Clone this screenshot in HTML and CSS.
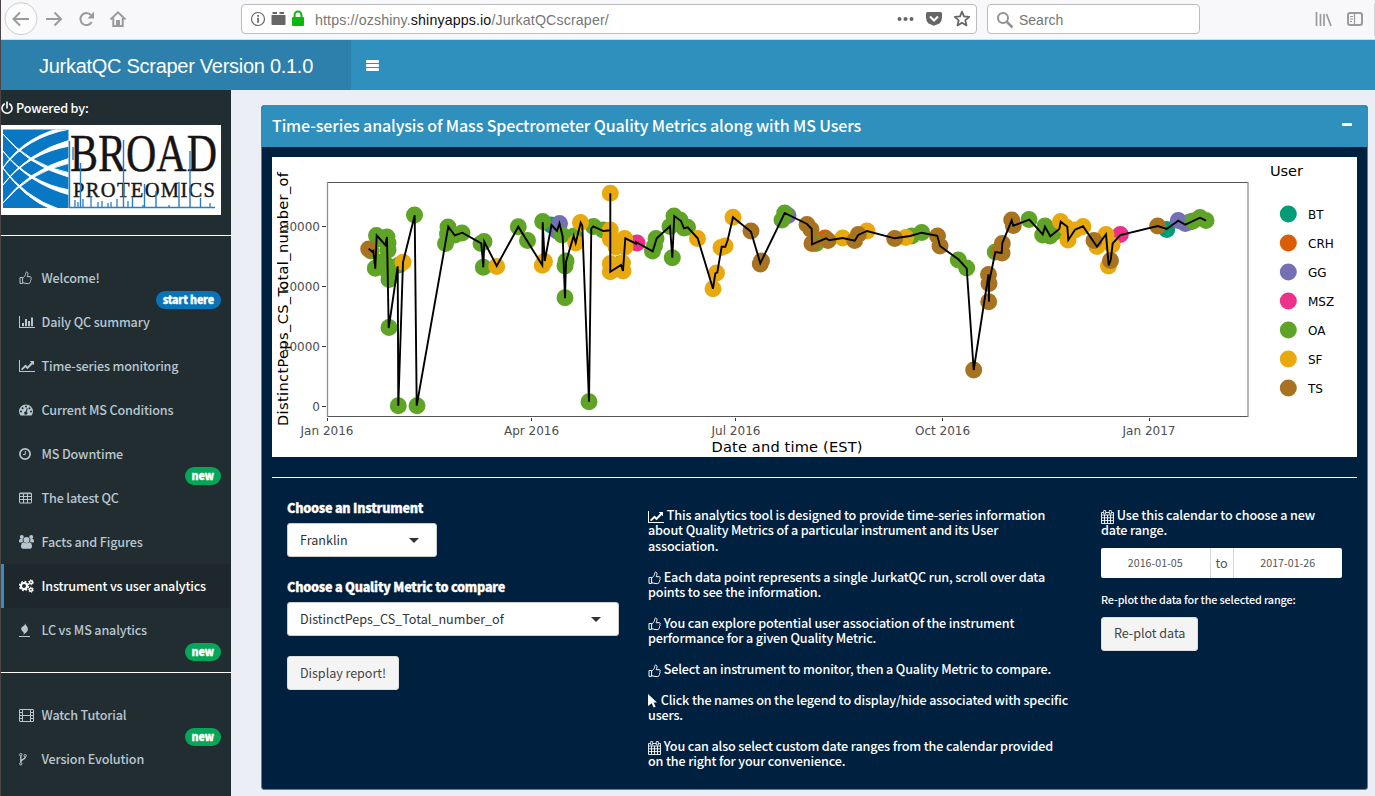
FILE: index.html
```html
<!DOCTYPE html>
<html lang="en">
<head>
<meta charset="utf-8">
<title>JurkatQC Scraper</title>
<link rel="stylesheet" href="styles.css">
</head>
<body>
<svg class="defs" width="0" height="0">
  <symbol id="thumb" viewBox="0 0 14 14"><path d="M1 6.500h2.600v5.900H1zM3.600 6.900C5.200 6.300 6 4.600 6.400 3.800 6.800 3 6.500 1.300 7.400 1.100c1.200 0 1.700.9 1.600 2-.1.9-.7 1.700-.8 2.600h3c1.100 0 1.500 1.400.6 2 .6.600.4 1.500-.3 1.800.3.700 0 1.300-.6 1.600.1 1-.4 1.500-1.300 1.500H8c-1.600 0-2.700-.8-4.400-.9" fill="none" stroke="currentColor" stroke-width="1"/></symbol>
  <symbol id="bars" viewBox="0 0 16 14"><path d="M0 1h1v11h15v1H0zM3 8h2v3.200H3zM6 4h2v7.200H6zM9 6h2v5.200H9zM12 2.500h2v8.700h-2z" fill="currentColor"/></symbol>
  <symbol id="line" viewBox="0 0 16 14"><path d="M0 1h1v11h15v1H0zM10.700 2h4.300v4.300l-1.300-1.300-5.200 5.200-2-2L3.200 11.300 2 10l4.500-4.500 2 2L12.200 3.500z" fill="currentColor"/></symbol>
  <symbol id="dash" viewBox="0 0 14 14"><path fill-rule="evenodd" d="M1.300 12.300A7 7 0 0 1 0 8.500a7 7 0 0 1 14 0 7 7 0 0 1-1.300 3.800q-.2.300-.6.300H1.900q-.4 0-.6-.3zM1 8.500a1 1 0 1 0 2 0 1 1 0 0 0-2 0zM2.600 5.200a1 1 0 1 0 2 0 1 1 0 0 0-2 0zM6 3.500a1 1 0 1 0 2 0 1 1 0 0 0-2 0zM9.500 5.200a1 1 0 1 0 2 0 1 1 0 0 0-2 0zM11 8.500a1 1 0 1 0 2 0 1 1 0 0 0-2 0zM7.900 4.900L6.700 8.500a1.600 1.600 0 1 0 1.100.3l1-3.600z" fill="currentColor"/></symbol>
  <symbol id="clock" viewBox="0 0 14 14"><circle cx="6" cy="7" r="5.100" fill="none" stroke="currentColor" stroke-width="1.700"/><path d="M6.300 4v3.500H4" fill="none" stroke="currentColor"/></symbol>
  <symbol id="table" viewBox="0 0 14 14"><path d="M.5 2.500q0-.5.500-.5h11q.5 0 .5.500v9q0 .5-.5.500H1q-.5 0-.5-.500zM.5 5.500h12M.5 8.500h12M4.500 3v9M8.500 3v9M.5 2.700h12" fill="none" stroke="currentColor"/></symbol>
  <symbol id="users" viewBox="0 0 15 14"><path d="M2.500 13Q2 12.500 2 11q0-3 2.200-3.700Q7.500 9.300 10.800 7.300 13 8 13 11q0 1.500-.5 2l-1 .7h-8zM0 6.500Q0 4 1 4h2.200l.6.500Q3.500 6 4 6.800L2 7.500H1Q0 7.500 0 6.500zM15 6.500Q15 4 14 4h-2.200l-.6.500q.3 1.500-.2 2.300l2 .7h1q1 0 1-1z" fill="currentColor"/><circle cx="7.500" cy="4.900" r="3" fill="currentColor"/><circle cx="2.800" cy="2" r="2" fill="currentColor"/><circle cx="12.200" cy="2" r="2" fill="currentColor"/></symbol>
  <symbol id="cogs" viewBox="0 0 15 14"><g fill="none" stroke="currentColor"><circle cx="5" cy="7" r="3" stroke-width="2"/><circle cx="5" cy="7" r="4.500" stroke-width="1.500" stroke-dasharray="1.770"/><circle cx="12" cy="3.300" r="1.500" stroke-width="1.400"/><circle cx="12" cy="3.300" r="2.500" stroke-width=".9" stroke-dasharray="1.300"/><circle cx="12" cy="10.800" r="1.500" stroke-width="1.400"/><circle cx="12" cy="10.800" r="2.500" stroke-width=".9" stroke-dasharray="1.300"/></g></symbol>
  <symbol id="fire" viewBox="0 0 14 14"><path d="M0 13h11v1H0zM6 .3c.7 2 3 3.400 2.900 6C8.900 9 6.700 9.500 4.500 12c.3-1.400.8-2-.4-3C3 8 1.800 6.800 2.300 5.100 2.900 3.500 6.200 3 6 .3z" fill="currentColor"/></symbol>
  <symbol id="film" viewBox="0 0 15 14"><path d="M1 1.500h13q.5 0 .5.500v11q0 .5-.5.500H1q-.5 0-.5-.500V2q0-.5.500-.500zM3.500 1.500v12M11.500 1.500v12M3.500 7.500h8M.5 4.500h3M.5 7.500h3M.5 10.500h3M11.500 4.500h3M11.500 7.500h3M11.500 10.500h3" fill="none" stroke="currentColor"/></symbol>
  <symbol id="fork" viewBox="0 0 14 14"><g fill="none" stroke="currentColor"><circle cx="1.800" cy="2.700" r="1.200"/><circle cx="1.800" cy="11.800" r="1.200"/><circle cx="6.200" cy="3.700" r="1.200"/><path d="M1.800 4v6.600M6.200 5c0 2.800-4.400 2-4.400 5" stroke-width="1.400"/></g></symbol>
  <symbol id="power" viewBox="0 0 12 14"><path d="M3.300 3A5 5 0 1 0 8.700 3M6 1v6" fill="none" stroke="currentColor" stroke-width="1.600" stroke-linecap="round"/></symbol>
  <symbol id="pointer" viewBox="0 0 10 14"><path d="M0 0l9 8.500H5.600l2 4.200-2 .9-1.900-4.300L0 12z" fill="currentColor"/></symbol>
  <symbol id="cal" viewBox="0 0 13 14"><path d="M.5 2.500h12v11H.5zM.5 5h12M3.500 5v8.500M6.500 5v8.500M9.500 5v8.500M.5 7.800h12M.5 10.600h12" fill="none" stroke="currentColor" stroke-width=".9"/><path d="M2.700.5h2v3.400h-2zM8.300.5h2v3.400h-2z" fill="#00203f" stroke="currentColor" stroke-width=".8"/></symbol>
  <clipPath id="mark"><rect x="2" y="4.500" width="65.500" height="78.500"/></clipPath>
</svg>

<div class="browser">
  <div class="nav-icons">
    <svg width="140" height="38" viewBox="0 0 140 38" fill="none" stroke="#9b9b9e" stroke-width="2">
      <circle cx="21" cy="18.700" r="16" fill="#fcfcfc" stroke="#cfcfd1" stroke-width="1"/>
      <path d="M29 19H14M20 12.500L13.500 19l6.500 6.500M46 19h15M54.500 12.500L61 19l-6.500 6.500"/>
      <path d="M91.700 22A6 6 0 1 1 91 15.200"/><path d="M94 11.500v7h-6.500z" fill="#9b9b9e" stroke="none"/>
      <path d="M110.500 19.500L118 12.300l7.500 7.200M113.300 18v8h9.400v-8"/><path d="M116 20h4v6h-4z" fill="#9b9b9e" stroke="none"/>
    </svg>
  </div>
  <div class="url">
    <svg width="60" height="28" viewBox="0 0 60 28"><circle cx="16" cy="14" r="6.500" fill="none" stroke="#6a6a6c" stroke-width="1.200"/><path d="M15.200 12.700h1.700v5h-1.700zM15.200 10h1.700v1.700h-1.700zM30 10q-.5 0-.5.500v8.500q0 1 1 1h12q1 0 1-1v-8.500q0-.5-.5-.500zM30.500 7h4.500v2h-4.500zM37.500 7H42v2h-4.500z" fill="#666"/><rect x="50" y="12" width="12" height="9" rx="1" fill="#0db80d"/><path d="M52.600 13V9.800a3.400 3.400 0 0 1 6.800 0V13" fill="none" stroke="#0db80d" stroke-width="2"/></svg>
    <span class="address">https://ozshiny.<b>shinyapps.io</b>/JurkatQCscraper/</span>
    <svg class="url-actions" width="84" height="28" viewBox="0 0 84 28"><g fill="#666"><circle cx="10.500" cy="14" r="2"/><circle cx="16.500" cy="14" r="2"/><circle cx="22.500" cy="14" r="2"/><path d="M38.500 7h13q1.500 0 1.500 1.500v4q0 3.500-2.500 6L45 20.700l-5.500-2.200Q37 16 37 12.500v-4Q37 7 38.500 7z"/></g><path d="M41 11.500l4 4 4-4" fill="none" stroke="#fff" stroke-width="2"/><path d="M73 6.700l2 4.700 5.200.4-3.900 3.500 1.200 5.100-4.500-2.700-4.500 2.700 1.200-5.100-3.900-3.500 5.200-.4z" fill="none" stroke="#666" stroke-width="1.800" stroke-linejoin="round"/></svg>
  </div>
  <div class="search"><svg width="20" height="20" viewBox="0 0 20 20" fill="none" stroke="#929294" stroke-width="2"><circle cx="7" cy="8" r="5"/><path d="M10.500 11.500L16.500 17.500" stroke-width="2.500"/></svg><span>Search</span></div>
  <svg class="tools" width="64" height="38" viewBox="0 0 64 38"><path d="M5.500 12v14M9.500 14v12M13 14v12M15.500 14l4.500 12" fill="none" stroke="#9a9a9a" stroke-width="1.700"/><rect x="37" y="13" width="14" height="12" rx="2" fill="none" stroke="#9a9a9a" stroke-width="2"/><path d="M43.500 13v12M39 16.500h3M39 19h3M39 21.500h2" stroke="#9a9a9a" stroke-width="1.200"/><path d="M63.500 3v33" stroke="#d5d5d8"/></svg>
</div>

<header class="topbar"><div class="brand"><span>JurkatQC Scraper Version 0.1.0</span></div><button class="toggle"><i></i><i></i><i></i></button></header>

<div class="shell">
  <aside class="sidebar">
    <div class="powered"><svg width="12" height="14"><use href="#power"/></svg><span>Powered by:</span></div>
    <svg class="logo" width="220" height="90" viewBox="0 0 220 90">
      <rect width="220" height="90" fill="#fff"/>
      <rect x="2" y="4.500" width="65.500" height="78.500" fill="#0878c4"/>
      <g clip-path="url(#mark)" fill="#fff" stroke="#fff" stroke-width=".9">
        <path d="M1 8Q28 40 69 48v4.500Q27 41 1 8z"/><path d="M1 25Q28 58 69 65v5Q27 59 1 25z"/><path d="M1 42Q25 73 58 84h-8Q24 74 1 42z"/>
        <path d="M1 79Q28 47 69 38v-5Q27 45 1 79z"/><path d="M1 61Q27 28 69 21v-6Q26 27 1 61z"/><path d="M1 44Q25 12 69 4V1Q24 9 1 44z"/>
      </g>
      <g class="logo-text"><text x="69" y="46" font-size="53" textLength="147" lengthAdjust="spacingAndGlyphs">BROAD</text><text x="72" y="72.300" font-size="20.500" textLength="142" lengthAdjust="spacing">PROTEOMICS</text></g>
      <path d="M68.500 16v67M72 22v13M79.500 38v45M122.500 15v68M143.500 59v23M155 66v17M178 57v25M189 26v57M199.500 73v10M131.500 72v11" stroke="#2b7cc0" stroke-width="1.400"/>
      <path d="M68 82.500h146M74 83v-8M77 83v-6M82 83v-9M90 83v-12M97 83v-6M101 83v-7M107 83v-5M110 83v-6M116 83v-9M127 83v-7M142 83v-3M168 83v-3M209 83v-5" stroke="#2b7cc0" stroke-width="1.300"/>
    </svg>
    <nav class="menu main-menu">
      <a><svg width="16" height="14"><use href="#thumb" width="14"/></svg>Welcome!<em class="badge blue">start here</em></a>
      <a><svg width="16" height="14"><use href="#bars" width="16"/></svg>Daily QC summary</a>
      <a><svg width="16" height="14"><use href="#line" width="16"/></svg>Time-series monitoring</a>
      <a><svg width="16" height="14"><use href="#dash" width="14"/></svg>Current MS Conditions</a>
      <a><svg width="16" height="14"><use href="#clock" width="14"/></svg>MS Downtime<em class="badge">new</em></a>
      <a><svg width="16" height="14"><use href="#table" width="14"/></svg>The latest QC</a>
      <a><svg width="16" height="14"><use href="#users" width="15"/></svg>Facts and Figures</a>
      <a class="active"><svg width="16" height="14"><use href="#cogs" width="15"/></svg>Instrument vs user analytics</a>
      <a><svg width="16" height="14"><use href="#fire" width="14"/></svg>LC vs MS analytics<em class="badge">new</em></a>
    </nav>
    <nav class="menu extra-menu">
      <a><svg width="16" height="14"><use href="#film" width="15"/></svg>Watch Tutorial<em class="badge">new</em></a>
      <a><svg width="16" height="14"><use href="#fork" width="14"/></svg>Version Evolution</a>
    </nav>
  </aside>

  <main class="content">
    <section class="box">
      <div class="box-head"><h3>Time-series analysis of Mass Spectrometer Quality Metrics along with MS Users</h3><i class="minus"></i></div>
      <div class="box-body">
        <svg class="chart" width="1085" height="300" viewBox="272 157 1085 300">
          <rect x="272" y="157" width="1085" height="300" fill="#fff"/>
          <path d="M327 182.500h921M327 416.500h921" stroke="#555" fill="none"/>
          <path d="M327.500 182v235M1248 182v235" stroke="#909090" stroke-width="1.300" fill="none"/>
          <path d="M322 226.500h4M322 286.500h4M322 346.500h4M322 406.500h4M327.500 418v3M531.500 418v3M735.500 418v3M942.500 418v3M1149.500 418v3" stroke="#333"/>
          <g class="tick"><g text-anchor="end"><text x="320" y="231">30000</text><text x="320" y="291">20000</text><text x="320" y="351">10000</text><text x="320" y="411">0</text></g>
          <g text-anchor="middle"><text x="327" y="435">Jan 2016</text><text x="531.500" y="435">Apr 2016</text><text x="736" y="435">Jul 2016</text><text x="942.500" y="435">Oct 2016</text><text x="1149" y="435">Jan 2017</text></g></g>
          <g class="axis"><text x="787" y="452" text-anchor="middle" textLength="151">Date and time (EST)</text><text transform="translate(288 299) rotate(-90)" text-anchor="middle" textLength="254">DistinctPeps_CS_Total_number_of</text><text x="1270" y="176" textLength="33">User</text></g>
          <g class="dots">
            <path stroke="#009b77" d="M551 225h0M1166.700 229.500h0"/>
            <path stroke="#dc5c04" d="M825 238h0"/>
            <path stroke="#7570b3" d="M557 231h0M559.500 223.500h0M788 215.500h0M1178.300 220.500h0M1185.300 223.500h0M1190 222h0"/>
            <path stroke="#ed3089" d="M637 243h0M1120.300 234.500h0"/>
            <path stroke="#5fa426" d="M371 251h0M375.300 268.300h0M376.500 235.500h0M381 239h0M387 237h0M388 243h0M388 250h0M382 262h0M388 266h0M388 272h0M389 279.500h0M389 327.500h0M398.300 405.700h0M399 265h0M414.500 215h0M417 405.700h0M448 227h0M445.500 243.500h0M447.500 234h0M455 235h0M462 233h0M481 243.500h0M483.300 267.300h0M484 241.500h0M518.300 226.700h0M527.500 240.500h0M542.700 221.500h0M562 235h0M565 297.700h0M565 266h0M566 261h0M574 236h0M589 401.700h0M593.500 226.500h0M603 230h0M620 264h0M652.500 251h0M654.500 246h0M656 238.500h0M670 226.500h0M672.300 257.700h0M674 216h0M680 220h0M684 228h0M687.500 227.300h0M782 220h0M784.700 213h0M816 243.500h0M911.700 236h0M921.700 232.500h0M958.300 260h0M966.700 268h0M995.300 252h0M1029 219.500h0M1042.700 235h0M1045 226h0M1050 236h0M1055 232h0M1193 221h0M1200 217.500h0M1206 220.500h0"/>
            <path stroke="#e8a90e" d="M403 262.300h0M496.700 266.500h0M542.300 265.300h0M544.500 261.500h0M575.700 243h0M580.500 222.500h0M610.300 193.300h0M610.300 230h0M610.300 239h0M610.300 263.500h0M610.300 271.700h0M616 247h0M622.500 263h0M623 271h0M624.700 238.500h0M625 247h0M697.500 238.500h0M713 288.700h0M716.500 273h0M721 247.500h0M725 246h0M733 217.300h0M842.700 238h0M867 231h0M905.700 237.500h0M1060.500 221.500h0M1066 227h0M1068 240h0M1075 230h0M1083 226.500h0M1097 246.500h0M1106 234.500h0M1112 245h0M1108.500 266h0"/>
            <path stroke="#a87321" d="M368.700 249h0M751 231h0M761.500 261h0M760.300 264h0M807 224.500h0M811 229.500h0M812 243.500h0M828 240.500h0M854.700 240.500h0M858.300 234.500h0M894.700 238.500h0M937.500 236h0M940 246h0M973.700 370h0M988.500 274.500h0M989 283.500h0M988.700 301.700h0M999 252h0M1002 253h0M1002.300 243.500h0M1011.700 220h0M1013.300 225.500h0M1094 240.500h0M1110.500 260.500h0M1157.700 226h0"/>
          </g>
          <polyline class="series" points="368.7,248.700 372,251.500 373.300,250.700 375.300,268.700 376.700,235.300 385.300,245 387,237 388.700,328 397.700,266.300 398.300,405.700 403,262.300 414.700,215.300 416.700,405.700 448.300,226.700 454.700,235.300 462.300,232.700 481.300,243.300 483.300,267.300 484.300,241.700 496.700,266 518.300,226.700 542.300,265.300 542.700,222.300 544.700,261 551.500,225 557,231 559.500,223.500 562.700,236.700 565,298.300 566,261.700 573.700,235.700 575.700,243 580.700,222.700 582.300,225.700 589,401.700 591.300,228.300 593.300,226.300 603.300,231 610.300,230.300 610.300,193.300 610.300,271.700 621,265 623,271 625.300,238.300 636,243.700 636,242 652.700,251.300 656.700,238.300 670,226.300 672.300,257.700 674.300,216 681,221 684,228.300 687.700,227.300 697.700,238.300 713,288.700 715.300,273.300 717.300,272.300 721.700,246.700 725.300,246.700 727.700,240 733,217.300 751,231.700 760.300,263.300 784.700,213 807,224 811.700,229 812,244.300 826,238.300 829.300,240.300 842.700,238 854.700,240.700 858.300,235 867,231 894.700,238.300 910,236 921.700,232.700 937.300,235.700 940,246 958.300,259.300 966.700,268.300 973.700,370 988.500,274.300 989,301.700 989,283 995.300,252 1001.700,253 1002.300,243.300 1011.700,220.300 1013.300,225.700 1029.300,219.700 1042.700,234.300 1045,226.700 1050.300,236.300 1059.300,229 1060.700,221.700 1067.300,226.700 1068.300,240 1075,229.700 1083,226.300 1097,246.700 1106,234.300 1108.700,265.300 1110.700,260 1112.700,243.300 1120.300,235 1157.700,226 1166.700,229 1178.300,220.700 1185.300,224.700 1200,217.700 1206,220.700"/>
          <g class="dots"><path stroke="#009b77" d="M1288.300 214h0"/><path stroke="#dc5c04" d="M1288.300 243h0"/><path stroke="#7570b3" d="M1288.300 272h0"/><path stroke="#ed3089" d="M1288.300 301h0"/><path stroke="#5fa426" d="M1288.300 330h0"/><path stroke="#e8a90e" d="M1288.300 359h0"/><path stroke="#a87321" d="M1288.300 388h0"/></g>
          <g class="key"><text x="1308" y="219">BT</text><text x="1308" y="248">CRH</text><text x="1308" y="277">GG</text><text x="1308" y="306">MSZ</text><text x="1308" y="335">OA</text><text x="1308" y="364">SF</text><text x="1308" y="393">TS</text></g>
        </svg>
        <div class="columns">
          <div class="col-form">
            <label class="l1">Choose an Instrument</label>
            <div class="select small"><span>Franklin</span><i></i></div>
            <label class="l2">Choose a Quality Metric to compare</label>
            <div class="select"><span>DistinctPeps_CS_Total_number_of</span><i></i></div>
            <button class="btn report">Display report!</button>
          </div>
          <div class="col-help">
            <p><svg width="16" height="14"><use href="#line" width="16"/></svg> This analytics tool is designed to provide time-series information<br>about Quality Metrics of a particular instrument and its User<br>association.</p>
            <p><svg width="13" height="14"><use href="#thumb" width="14"/></svg> Each data point represents a single JurkatQC run, scroll over data<br>points to see the information.</p>
            <p><svg width="13" height="14"><use href="#thumb" width="14"/></svg> You can explore potential user association of the instrument<br>performance for a given Quality Metric.</p>
            <p><svg width="13" height="14"><use href="#thumb" width="14"/></svg> Select an instrument to monitor, then a Quality Metric to compare.</p>
            <p><svg width="10" height="14"><use href="#pointer" width="10"/></svg> Click the names on the legend to display/hide associated with specific<br>users.</p>
            <p><svg width="13" height="14"><use href="#cal" width="13"/></svg> You can also select custom date ranges from the calendar provided<br>on the right for your convenience.</p>
          </div>
          <div class="col-date">
            <p><svg width="13" height="14"><use href="#cal" width="13"/></svg> Use this calendar to choose a new<br>date range.</p>
            <div class="range"><span class="date">2016-01-05</span><span class="to">to</span><span class="date">2017-01-26</span></div>
            <div class="replot">Re-plot the data for the selected range:</div>
            <button class="btn">Re-plot data</button>
          </div>
        </div>
      </div>
    </section>
  </main>
</div>
</body>
</html>
```

FILE: styles.css
```css
* { box-sizing: border-box; }
body { margin: 0; width: 1375px; height: 796px; overflow: hidden; background: #ebeff5; border-left: 1px solid #4b4548; font-family: "Noto Sans CJK SC", "Open Sans", sans-serif; font-size: 12.6px; }
.defs { position: absolute; }
svg { display: block; flex: none; }
p, h3 { margin: 0; }
button { font: inherit; border: 0; padding: 0; }

.browser { height: 40px; margin-left: -1px; display: flex; align-items: flex-start; background: #f8f8fa; border-bottom: 1px solid #d9dadf; font-family: "Liberation Sans", Arial, sans-serif; font-size: 14px; }
.nav-icons { width: 241px; }
.url { width: 736px; height: 30px; margin-top: 4px; display: flex; align-items: center; background: #fff; border: 1px solid #bcbcbe; border-radius: 4px; }
.url svg { overflow: visible; }
.address { margin: 2px 0 0 13px; color: #777; white-space: nowrap; font-size: 14.200px; letter-spacing: .14px; }
.address b { color: #111; font-weight: 400; }
.url-actions { margin-left: auto; margin-right: 3px; }
.search { width: 213px; height: 30px; margin: 4px 0 0 10px; padding: 1px 0 0 8px; display: flex; align-items: center; gap: 3px; background: #fff; border: 1px solid #bcbcbe; border-radius: 4px; color: #757575; }
.tools { margin-left: auto; }

.topbar { height: 50px; display: flex; background: #2f8fbd; }
.brand { width: 350px; display: flex; align-items: center; justify-content: center; background: #2d80ab; color: #fff; font: 20px "Liberation Sans", Arial, sans-serif; letter-spacing: -.28px; padding-top: 2px; }
.toggle { margin: 20px 0 0 15px; width: 13px; height: 11px; display: flex; flex-direction: column; gap: 1px; background: none; }
.toggle i { width: 13px; height: 3px; background: #fff; border-radius: 1px; flex: none; }

.shell { display: flex; height: 706px; }
.sidebar { width: 230px; flex: none; background: #222d32; color: #fff; letter-spacing: -.16px; }
.powered { height: 35px; display: flex; align-items: center; gap: 3px; font-weight: 500; }
.logo-text { font-family: "Liberation Serif", "Times New Roman", serif; letter-spacing: 0; fill: #171415; stroke: #171415; stroke-width: .4px; }
.menu { border-top: 1px solid #fff; padding-top: 20px; }
.main-menu { margin-top: 20px; height: 437px; }
.menu a { position: relative; display: flex; align-items: center; gap: 6.500px; height: 44px; padding: 0 0 2px 15px; border-left: 3px solid transparent; color: #b8c7ce; font-weight: 500; white-space: nowrap; }
.menu a svg { margin-top: 2px; }
.menu .active { background: #1e282c; color: #fff; border-left-color: #3c8dbc; }
.badge { position: absolute; right: 10px; top: 35px; height: 18px; line-height: 17px; padding: 0 7px; border-radius: 9px; background: #05a65a; color: #fff; font-size: 10.700px; font-style: normal; font-weight: 900; -webkit-text-stroke: .3px #fff; z-index: 1; }
.badge.blue { background: #0874b7; }

.content { padding: 15px 7px 6px 30px; flex: 1; }
.box { height: 685px; border: 1px solid #2f8fbd; border-radius: 3px; background: #00203f; overflow: hidden; }
.box-head { height: 41px; padding: 0 15px 3px 10px; display: flex; align-items: center; justify-content: space-between; background: #2f8fbd; color: #fff; }
.box-head h3 { font-size: 16px; font-weight: 500; line-height: 20px; letter-spacing: -.13px; white-space: nowrap; }
.minus { width: 10px; height: 3px; margin-top: -2px; background: #fff; border-radius: 1px; }
.box-body { padding: 10px; }
.tick { font: 12px "DejaVu Sans", Verdana, sans-serif; fill: #4d4d4d; }
.axis { font: 14.600px "DejaVu Sans", Verdana, sans-serif; fill: #000; }
.key { font: 12px "DejaVu Sans", Verdana, sans-serif; fill: #000; }
.dots path { stroke-width: 17px; stroke-linecap: round; fill: none; }
.series { fill: none; stroke: #000; stroke-width: 1.900px; }

.columns { margin-top: 20px; border-top: 1px solid #fff; display: flex; color: #fff; padding-left: 15px; }
.col-form { width: 361px; padding-top: 20px; }
.col-form label { display: block; line-height: 20px; font-weight: 900; letter-spacing: -.22px; -webkit-text-stroke: .3px #fff; margin-bottom: 5px; }
.col-form .l2 { margin-top: 20px; }
.select { width: 332px; height: 34px; padding: 0 17px 2px 12px; display: flex; align-items: center; justify-content: space-between; background: #fff; border: 1px solid #ccc; border-radius: 3px; color: #333; }
.select.small { width: 150px; }
.select i { margin-top: 2px; border: 5px solid transparent; border-top-color: #333; border-bottom: 0; }
.btn { height: 34px; padding: 0 12px 2px; background: #f4f4f4; color: #444; border: 1px solid #ddd; border-radius: 3px; display: block; white-space: nowrap; letter-spacing: -.05px; }
.report { margin-top: 20px; }
.col-help { width: 453px; padding-top: 29px; font-weight: 500; line-height: 15.400px; letter-spacing: -.15px; white-space: nowrap; }
.col-help p + p { margin-top: 15.400px; }
.columns p svg { display: inline-block; vertical-align: -1.500px; margin: -2px 0; }
.col-date { width: 241px; padding-top: 29px; font-weight: 500; }
.col-date p { line-height: 15.400px; letter-spacing: -.13px; white-space: nowrap; }
.range { margin-top: 10px; height: 30px; display: flex; background: #fff; border-radius: 2px; color: #555; font-weight: 400; line-height: 29px; text-align: center; }
.date { flex: 1; font-size: 10.700px; }
.to { width: 24px; border: solid #d2d6de; border-width: 0 1px; }
.replot { font-size: 10.800px; line-height: 20px; letter-spacing: -.13px; margin: 11px 0 8px; white-space: nowrap; }
.col-date .btn { font-weight: 400; }
```
